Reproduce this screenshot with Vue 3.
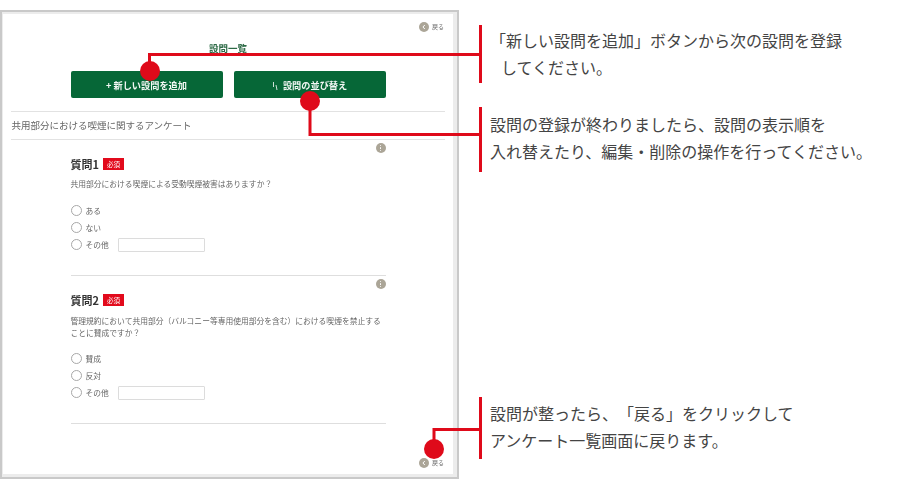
<script setup>
const questions = [
  { id: 1, text: '共用部分における喫煙による受動喫煙被害はありますか？', options: ['ある', 'ない'] },
  { id: 2, text: '管理規約において共用部分（バルコニー等専用使用部分を含む）における喫煙を禁止することに賛成ですか？', options: ['賛成', '反対'] }
]
</script>

<template>
  <div class="page">
    <section class="frame">
      <div class="card">
        <a class="back top-back">
          <svg width="10" height="10" viewBox="0 0 10 10"><circle cx="5" cy="5" r="5" fill="#aba597"/><path d="M5.8 3 3.9 5l1.9 2" fill="none" stroke="#fff" stroke-width="1"/></svg>
          <span>戻る</span>
        </a>
        <h1 class="title">設問一覧</h1>
        <div class="actions">
          <button class="btn">+ 新しい設問を追加</button>
          <button class="btn">
            <svg class="sort" width="6" height="8" viewBox="0 0 6 8"><path d="M1.5 0v5M4 3l1 5" stroke="#fff" stroke-width="0.8" fill="none"/></svg>
            設問の並び替え
          </button>
        </div>
        <div class="survey">共用部分における喫煙に関するアンケート</div>
        <div v-for="q in questions" :key="q.id" class="question">
          <div class="menu"><i></i><i></i><i></i></div>
          <div class="q-head">
            <span class="q-label">質問{{ q.id }}</span>
            <span class="badge">必須</span>
          </div>
          <p class="q-text">{{ q.text }}</p>
          <div class="options">
            <label v-for="o in q.options" :key="o" class="opt"><span class="radio"></span>{{ o }}</label>
            <label class="opt"><span class="radio"></span>その他<span class="input"></span></label>
          </div>
        </div>
        <a class="back bottom-back">
          <svg width="10" height="10" viewBox="0 0 10 10"><circle cx="5" cy="5" r="5" fill="#aba597"/><path d="M5.8 3 3.9 5l1.9 2" fill="none" stroke="#fff" stroke-width="1"/></svg>
          <span>戻る</span>
        </a>
      </div>
    </section>

    <aside class="notes">
      <div class="note n1">
        <p>「新しい設問を追加」ボタンから次の設問を登録</p>
        <p class="indent">してください。</p>
      </div>
      <div class="note n2">
        <p>設問の登録が終わりましたら、設問の表示順を</p>
        <p>入れ替えたり、編集・削除の操作を行ってください。</p>
      </div>
      <div class="note n3">
        <p>設問が整ったら、「戻る」をクリックして</p>
        <p>アンケート一覧画面に戻ります。</p>
      </div>
    </aside>

    <svg class="overlay" width="900" height="489" viewBox="0 0 900 489">
      <g fill="none" stroke="#df0a1a" stroke-width="3">
        <path d="M149.500 62V54.500H480"/>
        <path d="M310 105V134.500H480"/>
        <path d="M434 445V429.500H480"/>
      </g>
      <g fill="#df0a1a">
        <circle cx="150" cy="71" r="10"/>
        <circle cx="310" cy="101" r="10"/>
        <circle cx="434" cy="449" r="10"/>
      </g>
    </svg>
  </div>
</template>

<style scoped>
.page {
  position: relative;
  width: 900px;
  height: 489px;
  overflow: hidden;
  background: #fff;
  display: flex;
  font-family: "Noto Sans CJK JP", "Liberation Sans", sans-serif;
  text-spacing-trim: space-all;
}
.frame {
  box-sizing: border-box;
  width: 459px;
  height: 469px;
  margin-top: 10px;
  flex: none;
  border: 2px solid #c9c9c9;
  background: #ececec;
  padding: 2px 4px 3px 1px;
}
.card {
  position: relative;
  box-sizing: border-box;
  height: 100%;
  background: #fff;
  padding: 0 8px;
  filter: blur(0.35px);
}
.back {
  display: flex;
  align-items: center;
  justify-content: flex-end;
  gap: 3px;
  font-size: 6px;
  line-height: 10px;
  color: #666;
  padding-right: 1px;
}
.top-back { padding-top: 8px; }
.bottom-back {
  position: absolute;
  right: 8px;
  bottom: 6px;
}
.title {
  margin: 9px 0 0;
  text-align: center;
  font-size: 9.500px;
  line-height: 14px;
  font-weight: 700;
  color: #2e6b47;
}
.actions {
  display: flex;
  justify-content: center;
  gap: 11px;
  margin-top: 16px;
  margin-bottom: 13px;
}
.btn {
  width: 152px;
  height: 27px;
  border: 0;
  border-radius: 2px;
  background: #066737;
  color: #f2f7f4;
  font-family: inherit;
  font-size: 9.200px;
  font-weight: 700;
  padding: 0;
}
.sort { margin-right: 3px; vertical-align: -1px; }
.survey {
  border-top: 1px solid #e2e2e2;
  border-bottom: 1px solid #e2e2e2;
  height: 27px;
  line-height: 27px;
  padding-left: 0.500px;
  font-size: 9.500px;
  color: #666;
}
.question {
  position: relative;
  width: 315px;
  margin-left: 59.500px;
  box-sizing: border-box;
  height: 136px;
  padding-top: 18px;
  border-bottom: 1px solid #dedede;
}
.menu {
  position: absolute;
  right: 0;
  top: 3px;
  width: 10px;
  height: 10px;
  border-radius: 50%;
  background: #aba597;
  display: flex;
  flex-direction: column;
  align-items: center;
  justify-content: center;
  gap: 1px;
}
.menu i {
  width: 1.500px;
  height: 1.500px;
  background: #fff;
  border-radius: 50%;
}
.q-head {
  display: flex;
  align-items: center;
  gap: 4px;
  height: 12px;
}
.q-label {
  font-size: 11px;
  font-weight: 700;
  color: #333;
}
.badge {
  width: 21px;
  height: 12px;
  background: #e20a1c;
  color: #fff;
  font-size: 6.500px;
  line-height: 12px;
  text-align: center;
}
.q-text {
  margin: 8px 0 0;
  font-size: 7.780px;
  line-height: 12px;
  color: #666;
}
.options {
  margin-top: 15px;
  display: flex;
  flex-direction: column;
  gap: 6px;
}
.opt {
  display: flex;
  align-items: center;
  height: 11px;
  font-size: 7.780px;
  color: #666;
}
.radio {
  box-sizing: border-box;
  width: 11px;
  height: 11px;
  border: 1px solid #a8a8a8;
  border-radius: 50%;
  margin-right: 4px;
  background: #fff;
}
.input {
  box-sizing: border-box;
  width: 87px;
  height: 14px;
  margin-left: 9px;
  border: 1px solid #dcdcdc;
  border-radius: 1px;
  background: #fff;
}
.question + .question { height: 148px; }
.question + .question .q-text { margin-top: 9px; }
.question + .question .options { margin-top: 14px; }
.notes {
  margin-left: 20px;
  padding-top: 25px;
  flex: none;
}
.note {
  box-sizing: border-box;
  border-left: 3px solid #df0a1a;
  padding-left: 8px;
  font-size: 16px;
  line-height: 27px;
  color: #444;
  white-space: nowrap;
}
.note p { margin: 0; }
.n1 { height: 58px; padding-top: 2px; }
.n1 .indent { margin-left: 11px; }
.n2 { height: 65px; margin-top: 24px; padding-top: 4px; }
.n3 { height: 62px; margin-top: 225px; padding-top: 3px; }
.overlay {
  position: absolute;
  left: 0;
  top: 0;
  pointer-events: none;
}
</style>
